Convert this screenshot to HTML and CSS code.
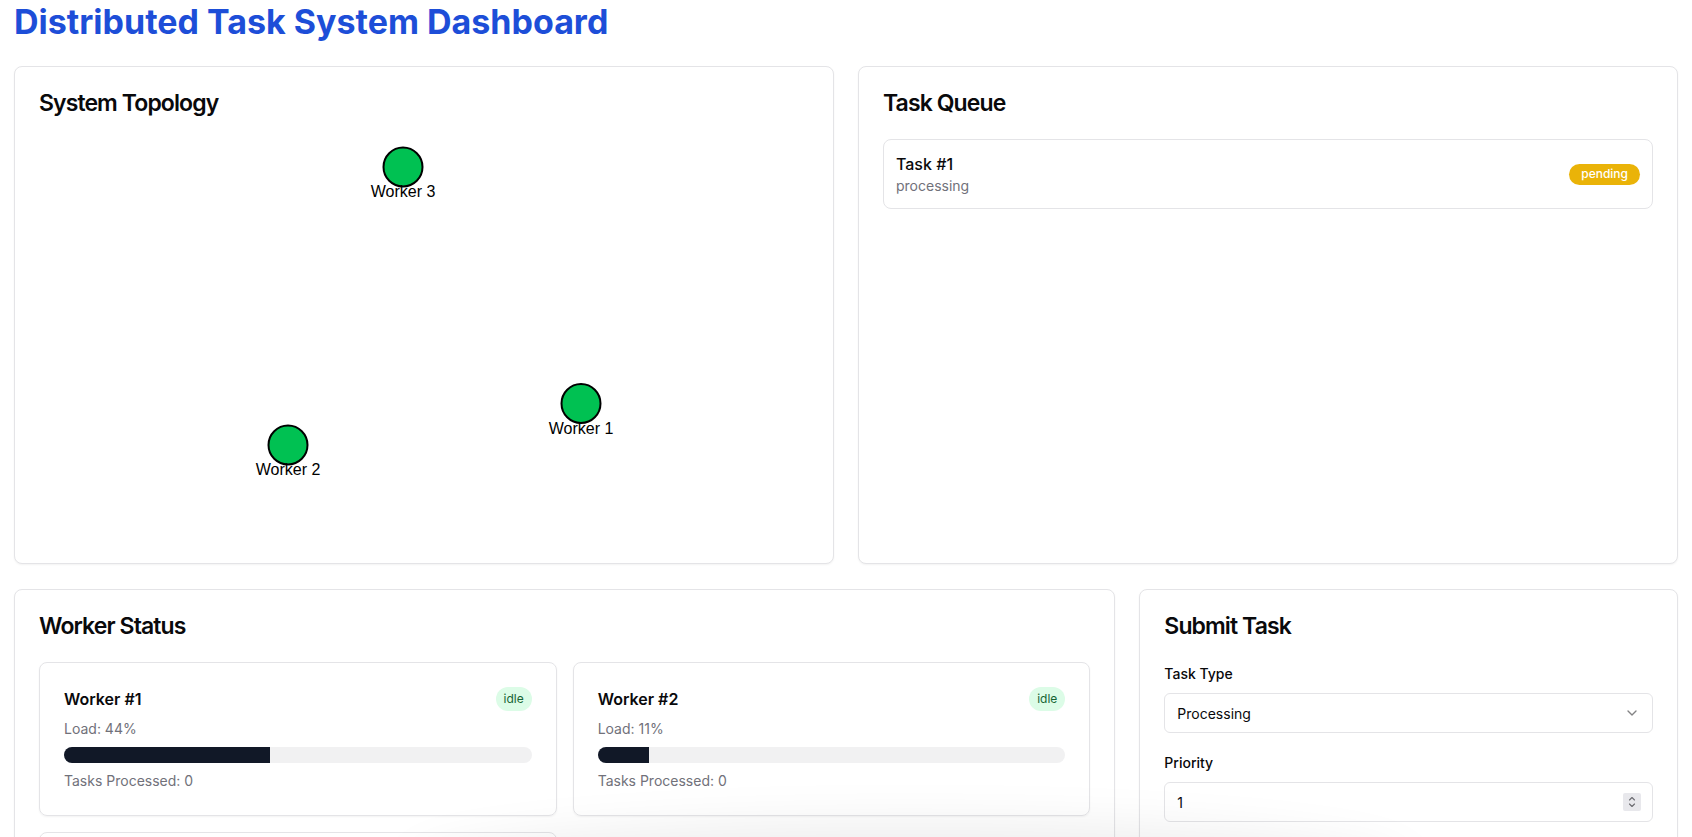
FILE: index.html
```html
<!DOCTYPE html>
<html lang="en">
<head>
<meta charset="utf-8">
<title>Distributed Task System Dashboard</title>
<link rel="stylesheet" href="styles.css">
</head>
<body>
<div class="page">
  <h1 class="page-title">Distributed Task System Dashboard</h1>

  <div class="grid-top">
    <section class="card">
      <div class="card-header"><h2 class="card-title">System Topology</h2></div>
      <div class="card-content">
        <svg class="topology" width="770" height="400" viewBox="0 0 770 400">
          <g class="node">
            <circle cx="364" cy="28" r="19.5"></circle>
            <text x="364" y="58">Worker 3</text>
          </g>
          <g class="node">
            <circle cx="542" cy="264.5" r="19.5"></circle>
            <text x="542" y="294.5">Worker 1</text>
          </g>
          <g class="node">
            <circle cx="249" cy="306" r="19.5"></circle>
            <text x="249" y="336">Worker 2</text>
          </g>
        </svg>
      </div>
    </section>

    <section class="card">
      <div class="card-header"><h2 class="card-title">Task Queue</h2></div>
      <div class="card-content">
        <div class="task-list">
          <div class="task-item">
            <div class="task-info">
              <div class="task-name">Task #1</div>
              <div class="task-type">processing</div>
            </div>
            <span class="badge badge-pending">pending</span>
          </div>
        </div>
      </div>
    </section>
  </div>

  <div class="grid-bottom">
    <section class="card span-2">
      <div class="card-header"><h2 class="card-title">Worker Status</h2></div>
      <div class="card-content">
        <div class="worker-grid">
          <div class="worker-card">
            <div class="worker-head">
              <span class="worker-name">Worker #1</span>
              <span class="badge badge-idle">idle</span>
            </div>
            <div class="muted">Load: 44%</div>
            <div class="progress"><div class="progress-fill" style="width:44%"></div></div>
            <div class="muted">Tasks Processed: 0</div>
          </div>
          <div class="worker-card">
            <div class="worker-head">
              <span class="worker-name">Worker #2</span>
              <span class="badge badge-idle">idle</span>
            </div>
            <div class="muted">Load: 11%</div>
            <div class="progress"><div class="progress-fill" style="width:11%"></div></div>
            <div class="muted">Tasks Processed: 0</div>
          </div>
          <div class="worker-card">
            <div class="worker-head">
              <span class="worker-name">Worker #3</span>
              <span class="badge badge-idle">idle</span>
            </div>
            <div class="muted">Load: 27%</div>
            <div class="progress"><div class="progress-fill" style="width:27%"></div></div>
            <div class="muted">Tasks Processed: 0</div>
          </div>
        </div>
      </div>
    </section>

    <section class="card">
      <div class="card-header"><h2 class="card-title">Submit Task</h2></div>
      <div class="card-content">
        <form class="form">
          <div class="field">
            <label class="label">Task Type</label>
            <div class="select">
              <span>Processing</span>
              <svg class="chevron" width="16" height="16" viewBox="0 0 24 24" fill="none" stroke="currentColor" stroke-width="2" stroke-linecap="round" stroke-linejoin="round"><path d="m6 9 6 6 6-6"/></svg>
            </div>
          </div>
          <div class="field">
            <label class="label">Priority</label>
            <div class="input">
              <span>1</span>
              <span class="spinner">
                <svg width="8" height="14" viewBox="0 0 8 14" fill="none" stroke="#6b6b70" stroke-width="1.1" stroke-linecap="round" stroke-linejoin="round"><path d="M1.5 5 4 2.5 6.5 5"/><path d="M1.5 9 4 11.5 6.5 9"/></svg>
              </span>
            </div>
          </div>
          <button type="button" class="button">Submit Task</button>
        </form>
      </div>
    </section>
  </div>
</div>
<div class="bottom-shade"></div>
</body>
</html>
```

FILE: styles.css
```css
* { box-sizing: border-box; }

body {
  margin: 0;
  background: #ffffff;
  color: #09090b;
  font-family: Inter, "Noto Sans", "Liberation Sans", sans-serif;
}

.page {
  padding: 2px 14px 24px;
}

.page-title {
  margin: 0 0 24px;
  font-size: 34px;
  line-height: 40px;
  font-weight: 700;
  color: #1d4ed8;
  letter-spacing: 0;
}

.grid-top {
  display: grid;
  grid-template-columns: 1fr 1fr;
  gap: 24px;
  margin-bottom: 25px;
}

.grid-bottom {
  display: grid;
  grid-template-columns: repeat(3, 1fr);
  gap: 24px;
  align-items: start;
}

.span-2 { grid-column: span 2; }

.card {
  background: #fff;
  border: 1px solid #e4e4e7;
  border-radius: 8px;
  box-shadow: 0 1px 2px rgba(0, 0, 0, 0.05);
}

.card-header { padding: 24px; }

.card-title {
  margin: 0;
  font-size: 23px;
  line-height: 24px;
  font-weight: 600;
  letter-spacing: -0.9px;
}

.card-content { padding: 0 24px 24px; }

.topology {
  display: block;
  width: 100%;
  height: 400px;
  overflow: visible;
}

.node circle {
  fill: #00c152;
  stroke: #000;
  stroke-width: 2;
}

.node text {
  font-family: "Liberation Sans", Arial, sans-serif;
  font-size: 16px;
  fill: #000;
  text-anchor: middle;
}

.task-list {
  display: flex;
  flex-direction: column;
  gap: 8px;
}

.task-item {
  display: flex;
  align-items: center;
  justify-content: space-between;
  padding: 12px;
  border: 1px solid #e4e4e7;
  border-radius: 8px;
}

.task-name {
  font-size: 16px;
  line-height: 24px;
  font-weight: 500;
}

.task-type,
.muted {
  font-size: 14px;
  line-height: 20px;
  color: #71717a;
}

.badge {
  display: inline-block;
  border-radius: 9999px;
  font-size: 12px;
  line-height: 16px;
}

.badge-pending {
  padding: 2.5px 12px;
  background: #eab308;
  color: #fff;
  font-weight: 500;
}

.badge-idle {
  padding: 4px 8px;
  background: #dcfce7;
  color: #166534;
}

.worker-grid {
  display: grid;
  grid-template-columns: 1fr 1fr;
  gap: 16px;
}

.worker-card {
  border: 1px solid #e4e4e7;
  border-radius: 8px;
  padding: 24px;
  box-shadow: 0 1px 2px rgba(0, 0, 0, 0.05);
}

.worker-head {
  display: flex;
  align-items: center;
  justify-content: space-between;
  margin-bottom: 8px;
}

.worker-name {
  font-size: 16px;
  line-height: 24px;
  font-weight: 600;
}

.progress {
  height: 16px;
  margin: 8px 0;
  border-radius: 9999px;
  background: #f1f1f2;
  overflow: hidden;
}

.progress-fill {
  height: 100%;
  background: #111827;
}

.form {
  display: flex;
  flex-direction: column;
  gap: 20px;
  padding-top: 2px;
}

.label {
  display: block;
  font-size: 14px;
  line-height: 20px;
  font-weight: 500;
  margin-bottom: 9px;
}

.select,
.input {
  position: relative;
  display: flex;
  align-items: center;
  justify-content: space-between;
  height: 40px;
  padding: 0 12px;
  border: 1px solid #e4e4e7;
  border-radius: 6px;
  font-size: 14px;
  background: #fff;
}

.chevron {
  color: #09090b;
  opacity: 0.5;
}

.spinner {
  position: absolute;
  right: 11px;
  top: 10px;
  width: 18px;
  height: 18px;
  display: flex;
  align-items: center;
  justify-content: center;
  background: #e8e8ec;
  border-radius: 2px;
}

.button {
  height: 40px;
  border: none;
  border-radius: 6px;
  background: #18181b;
  color: #fafafa;
  font-family: inherit;
  font-size: 14px;
  font-weight: 500;
}

.bottom-shade {
  position: fixed;
  left: 420px;
  width: 980px;
  bottom: -70px;
  height: 70px;
  border-radius: 50%;
  box-shadow: 0 0 50px 14px rgba(0, 0, 0, 0.07);
  pointer-events: none;
}
```
